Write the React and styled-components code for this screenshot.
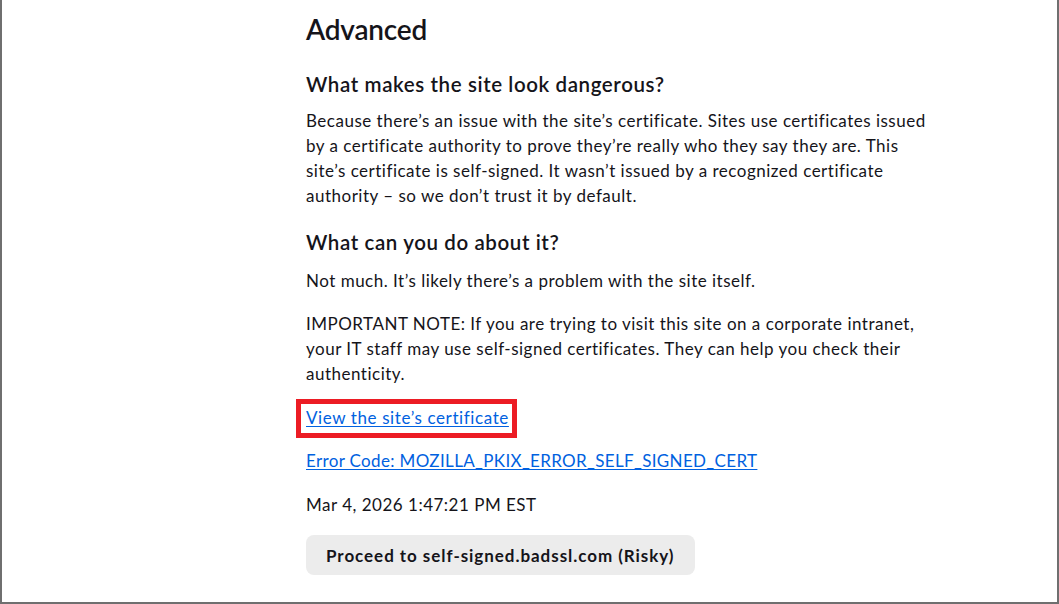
import React from "react";
import styled, { createGlobalStyle } from "styled-components";

const GlobalStyle = createGlobalStyle`
  html, body {
    margin: 0;
    padding: 0;
    background: #ffffff;
  }
  body {
    font-family: "Lato", "Open Sans", sans-serif;
    color: #15141a;
  }
`;

const Frame = styled.div`
  box-sizing: border-box;
  width: 1059px;
  height: 604px;
  border: 2px solid #6f6f6f;
  border-top: none;
  overflow: hidden;
  display: flex;
`;

const Content = styled.div`
  width: 636px;
  margin-left: 304px;
  display: flex;
  flex-direction: column;
`;

const Title = styled.h1`
  margin: 11px 0 0;
  font-size: 28px;
  line-height: 36px;
  font-weight: 600;
  letter-spacing: -0.2px;
`;

const Heading = styled.h2`
  margin: ${(p) => p.$top}px 0 0;
  font-size: 20.5px;
  line-height: 28px;
  font-weight: 600;
  letter-spacing: 0.6px;
`;

const Para = styled.p`
  margin: ${(p) => p.$top}px 0 0;
  font-size: 17px;
  line-height: 25px;
  letter-spacing: 0.5px;
`;

const Link = styled.a`
  position: relative;
  align-self: flex-start;
  margin-top: ${(p) => p.$top}px;
  font-size: 17px;
  line-height: 25px;
  letter-spacing: ${(p) => p.$spacing}px;
  color: #0061e0;
  text-decoration: underline;
  text-underline-offset: 2px;
`;

/* red annotation box drawn over the link */
const Marker = styled.span`
  position: absolute;
  top: -6px;
  bottom: -8px;
  left: -10px;
  right: -8px;
  border: 5px solid #ec1c24;
  pointer-events: none;
`;

const Proceed = styled.button`
  align-self: flex-start;
  margin-top: 18px;
  height: 40px;
  padding: 0 20px;
  border: none;
  border-radius: 8px;
  background: #ececec;
  color: #15141a;
  font-family: inherit;
  font-size: 17px;
  font-weight: 700;
  letter-spacing: 0.95px;
`;

export default function App() {
  return (
    <>
      <GlobalStyle />
      <Frame>
        <Content>
          <Title>Advanced</Title>
          <Heading $top={23}>What makes the site look dangerous?</Heading>
          <Para $top={10}>
            Because there’s an issue with the site’s certificate. Sites use
            certificates issued by a certificate authority to prove they’re
            really who they say they are. This site’s certificate is
            self-signed. It wasn’t issued by a recognized certificate authority
            – so we don’t trust it by default.
          </Para>
          <Heading $top={20}>What can you do about it?</Heading>
          <Para $top={12}>
            Not much. It’s likely there’s a problem with the site itself.
          </Para>
          <Para $top={18}>
            IMPORTANT NOTE: If you are trying to visit this site on a corporate
            intranet, your IT staff may use self-signed certificates. They can
            help you check their authenticity.
          </Para>
          <Link href="#" $top={19} $spacing={0.6}>
            View the site’s certificate
            <Marker />
          </Link>
          <Link href="#" $top={18} $spacing={0.35}>
            Error Code: MOZILLA_PKIX_ERROR_SELF_SIGNED_CERT
          </Link>
          <Para $top={19}>Mar 4, 2026 1:47:21 PM EST</Para>
          <Proceed>Proceed to self-signed.badssl.com (Risky)</Proceed>
        </Content>
      </Frame>
    </>
  );
}
